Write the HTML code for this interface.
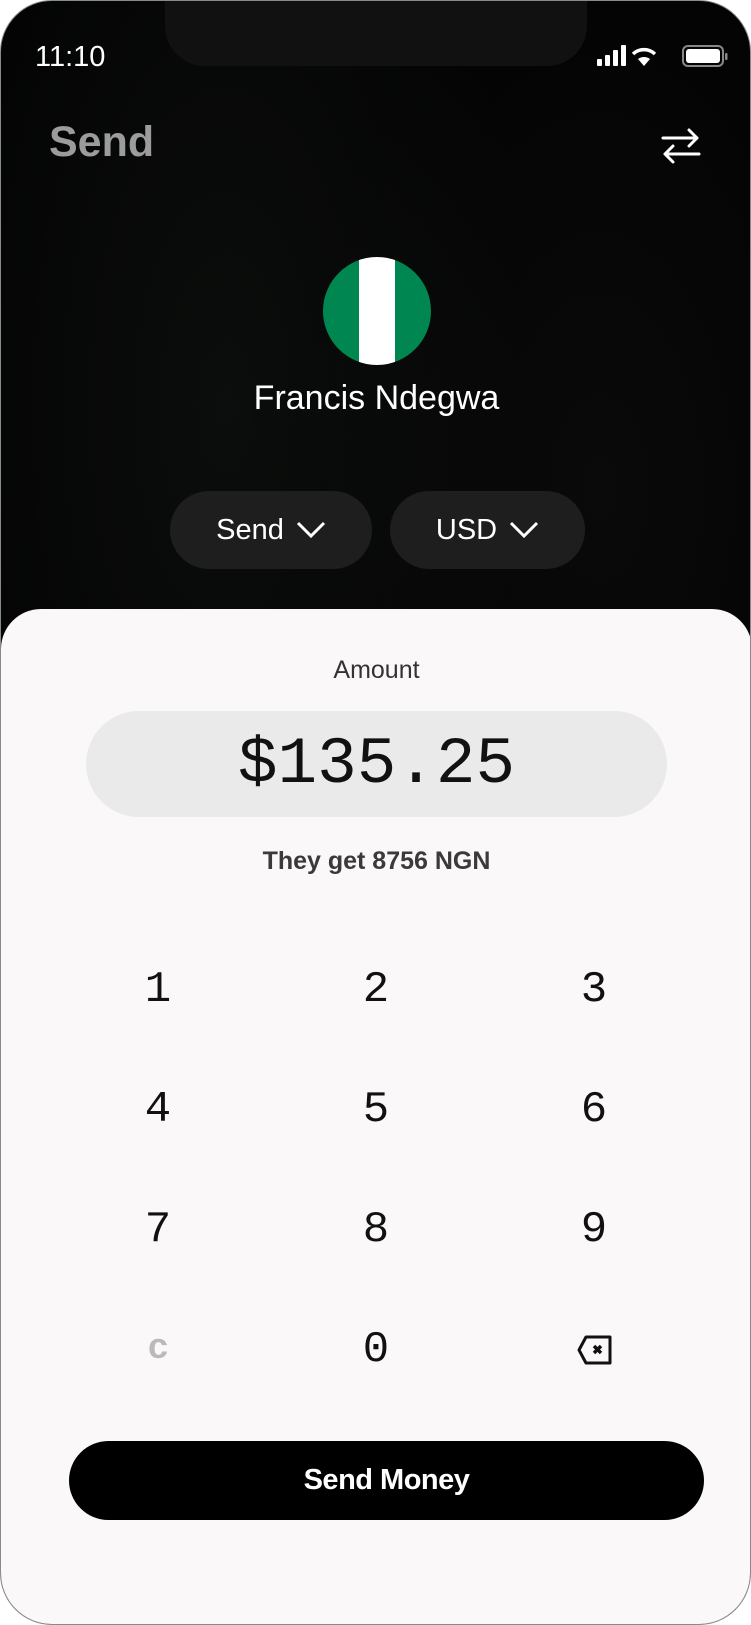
<!DOCTYPE html>
<html><head><meta charset="utf-8"><style>
*{margin:0;padding:0;box-sizing:border-box}
body{width:751px;height:1625px;background:#fff;position:relative;overflow:hidden;font-family:"Liberation Sans",sans-serif}
.phone{position:absolute;left:0;top:0;width:751px;height:1625px;border-radius:52px;background:#030303;overflow:hidden;border:1.5px solid #8a8a8a}
.bgtex{position:absolute;inset:0;background:radial-gradient(ellipse at 30% 25%,rgba(30,38,34,.3),transparent 40%),radial-gradient(ellipse at 80% 30%,rgba(30,30,30,.25),transparent 35%),radial-gradient(ellipse at 45% 75%,rgba(40,25,25,.2),transparent 35%)}
.notch{position:absolute;left:164px;top:-2px;width:422px;height:67px;background:#111;border-radius:0 0 40px 40px}
.time{position:absolute;left:34px;top:40px;color:#fff;font-size:29px;letter-spacing:0}
.title{position:absolute;left:48px;top:117px;color:#9c9c9c;font-size:43px;font-weight:bold}
.flag{position:absolute;left:322px;top:256px;width:108px;height:108px;border-radius:50%;overflow:hidden;background:linear-gradient(90deg,#008751 0 33.3%,#fff 33.3% 66.6%,#008751 66.6%)}
.name{position:absolute;left:0;width:751px;top:378px;text-align:center;color:#fff;font-size:34px}
.pill{position:absolute;top:490px;height:78px;border-radius:39px;background:#1e1e1e;color:#fff;font-size:29px;display:flex;align-items:center;justify-content:center;gap:12px}
.sheet{position:absolute;left:0;top:608px;width:751px;height:1020px;background:#faf8f9;border-radius:40px 40px 0 0}
.c{position:absolute;left:0;width:751px;text-align:center}
.amt{position:absolute;left:85px;top:710px;width:581px;height:106px;border-radius:53px;background:#eaeaea;display:flex;align-items:center;justify-content:center;font-family:"Liberation Mono",monospace;font-size:66px;color:#111}
.k{position:absolute;width:120px;margin-left:-60px;text-align:center;font-family:"Liberation Mono",monospace;font-size:44px;color:#111;line-height:50px}
.btn{position:absolute;left:68px;top:1440px;width:635px;height:79px;border-radius:40px;background:#000;color:#fff;font-size:29px;font-weight:bold;display:flex;align-items:center;justify-content:center;letter-spacing:-0.5px}
</style></head><body>
<div class="phone">
<div class="bgtex"></div>
<div class="notch"></div>
<div class="time">11:10</div>
<svg style="position:absolute;left:596px;top:43px" width="135" height="28" viewBox="0 0 135 28">
<rect x="0" y="15" width="5" height="7" rx="1" fill="#fff"/><rect x="8" y="11" width="5" height="11" rx="1" fill="#fff"/><rect x="16" y="6" width="5" height="16" rx="1" fill="#fff"/><rect x="24" y="1" width="5" height="21" rx="1" fill="#fff"/>
<path d="M47 22 L41 15 A10 10 0 0 1 53 15 Z" fill="#fff"/><path d="M36 10 A16 16 0 0 1 58 10" stroke="#fff" stroke-width="3.5" fill="none"/>
<rect x="86" y="2" width="40" height="20" rx="5" fill="none" stroke="#888" stroke-width="2"/><rect x="89" y="5" width="34" height="14" rx="3" fill="#fff"/><rect x="128" y="9" width="2.5" height="7" rx="1" fill="#888"/>
</svg>
<div class="title">Send</div>
<svg style="position:absolute;left:660px;top:127px" width="40" height="36" viewBox="0 0 40 36"><path d="M2 10H36M28 2L36 10L28 18M38 26H4M12 18L4 26L12 34" stroke="#fff" stroke-width="3" fill="none" stroke-linecap="round" stroke-linejoin="round"/></svg>
<div class="flag"></div>
<div class="name">Francis Ndegwa</div>
<div class="pill" style="left:169px;width:202px">Send <svg width="30" height="18" viewBox="0 0 30 18"><path d="M2 2L15 15L28 2" stroke="#fff" stroke-width="3" fill="none"/></svg></div>
<div class="pill" style="left:389px;width:195px">USD <svg width="30" height="18" viewBox="0 0 30 18"><path d="M2 2L15 15L28 2" stroke="#fff" stroke-width="3" fill="none"/></svg></div>
<div class="sheet"></div>
<div class="c" style="top:655px;font-size:25px;color:#333">Amount</div>
<div class="amt">$135.25</div>
<div class="c" style="top:846px;font-size:25px;font-weight:bold;color:#3a3a3a">They get 8756 NGN</div>
<div class="k" style="left:157px;top:964px">1</div><div class="k" style="left:375px;top:964px">2</div><div class="k" style="left:593px;top:964px">3</div>
<div class="k" style="left:157px;top:1084px">4</div><div class="k" style="left:375px;top:1084px">5</div><div class="k" style="left:593px;top:1084px">6</div>
<div class="k" style="left:157px;top:1204px">7</div><div class="k" style="left:375px;top:1204px">8</div><div class="k" style="left:593px;top:1204px">9</div>
<div class="k" style="left:157px;top:1320px;color:#bdb8ba;font-family:'Liberation Sans',sans-serif;font-size:36px;font-weight:bold">c</div><div class="k" style="left:375px;top:1324px">0</div>
<svg style="position:absolute;left:576px;top:1334px" width="36" height="30" viewBox="0 0 36 30"><path d="M9 2H33V28H9L2 15Z" stroke="#111" stroke-width="3" fill="none" stroke-linejoin="round"/><path d="M17 11L24 18M24 11L17 18" stroke="#111" stroke-width="3.5"/></svg>
<div class="btn">Send Money</div>
</div>
</body></html>
